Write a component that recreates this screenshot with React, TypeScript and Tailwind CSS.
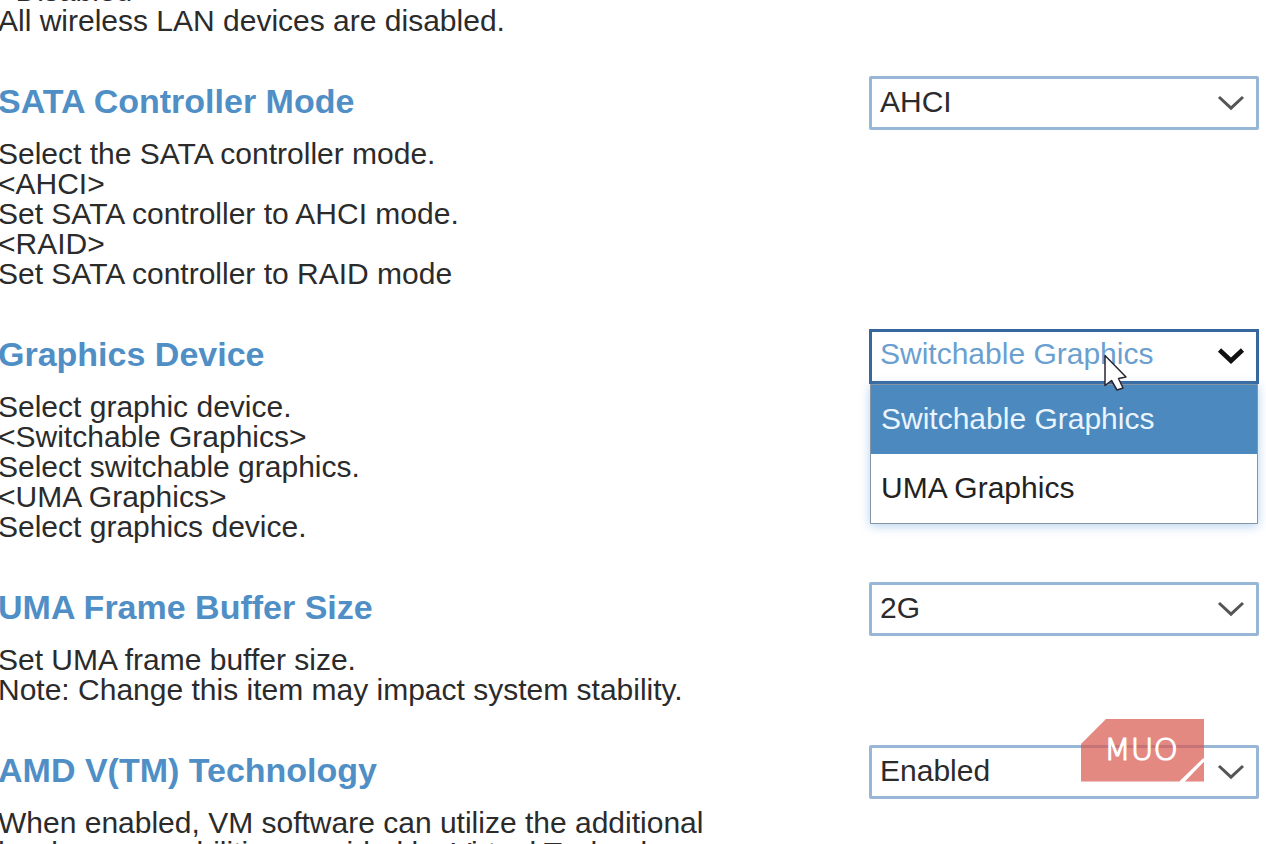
import { useState } from "react";
import type { ReactNode } from "react";

function Chevron({ bold = false }: { bold?: boolean }) {
  return (
    <svg
      className="pointer-events-none absolute top-[18px] right-[13px] h-[18px] w-[30px]"
      viewBox="0 0 30 18"
      fill="none"
      stroke={bold ? "#111111" : "#555555"}
      strokeWidth={bold ? 4.6 : 3}
      aria-hidden="true"
    >
      <path d={bold ? "M3.5 3 15 13.8 26.5 3" : "M3 3 15 14.2 27 3"} />
    </svg>
  );
}

function SelectBox({ id, options }: { id: string; options: string[] }) {
  return (
    <div className="relative">
      <select
        id={id}
        className="block h-[54px] w-full appearance-none rounded-[2px] border-3 border-[#98b7d6] bg-white pr-12 pb-[3px] pl-2 text-[30px] leading-[45px] text-[#2b2b2b] outline-none"
      >
        {options.map((option) => (
          <option key={option}>{option}</option>
        ))}
      </select>
      <Chevron />
    </div>
  );
}

function Pointer() {
  return (
    <svg
      className="pointer-events-none absolute top-[25px] left-[235px] z-20 h-[40px] w-[26px]"
      viewBox="0 0 26 40"
      aria-hidden="true"
    >
      <path
        d="M1 1.5V31.5L7.500 26.500L13 36L19 34L14.5 24.5L22 23Z"
        fill="#ffffff"
        stroke="#2b2530"
        strokeWidth="1.5"
        strokeLinejoin="round"
      />
    </svg>
  );
}

function OpenSelect({ id, options }: { id: string; options: string[] }) {
  const [value, setValue] = useState(options[0]);
  const [open, setOpen] = useState(true);
  return (
    <div className="relative">
      <button
        id={id}
        type="button"
        aria-haspopup="listbox"
        aria-expanded={open}
        onClick={() => setOpen(!open)}
        className="block h-[55px] w-full border-3 border-[#36679d] bg-white pb-[5px] pl-2 text-left text-[30px] leading-[44px] text-[#6a9fd0] outline-none"
      >
        {value}
      </button>
      <Chevron bold />
      {open && (
        <div
          role="listbox"
          className="absolute top-full right-0 left-0 z-10 mx-px border border-[#8496a6] bg-white shadow-[0_2px_10px_rgba(90,155,220,0.45)]"
        >
          {options.map((option) => (
            <button
              key={option}
              type="button"
              role="option"
              aria-selected={option === value}
              onClick={() => {
                setValue(option);
                setOpen(false);
              }}
              className="block h-[69px] w-full bg-white pb-[3px] pl-[10px] text-left text-[30px] leading-[45px] text-[#222222] aria-selected:bg-[#4b89bf] aria-selected:text-[#eaf4fd]"
            >
              {option}
            </button>
          ))}
        </div>
      )}
      <Pointer />
    </div>
  );
}

function MuoLogo() {
  return (
    <svg
      className="pointer-events-none absolute right-[55px] bottom-[16px] h-[64px] w-[123px]"
      viewBox="0 0 123 64"
      role="img"
      aria-label="MUO"
    >
      <path d="M0 25 25 0H123V39L98.5 62.5H0Z" fill="#d9564d" fillOpacity="0.7" />
      <path d="M123 42.5V62.5H104Z" fill="#d9564d" fillOpacity="0.7" />
      <path d="M100.5 62.5 123 40.5" stroke="#ffffff" strokeWidth="3" />
      <text
        x="23"
        y="41"
        fontFamily="'DejaVu Sans', sans-serif"
        fontWeight="200"
        fontSize="31"
        fill="#ffffff"
        stroke="#ffffff"
        strokeWidth="1.2"
      >
        MUO
      </text>
    </svg>
  );
}

function Setting({
  id,
  title,
  lines,
  children,
}: {
  id: string;
  title: string;
  lines: string[];
  children: ReactNode;
}) {
  return (
    <section className="flex items-start justify-between">
      <div>
        <h2 className="text-[34px] leading-[50px] font-bold text-[#4f8fc6]">
          <label htmlFor={id}>{title}</label>
        </h2>
        <Description lines={lines} />
      </div>
      <div className="w-[390px] shrink-0">{children}</div>
    </section>
  );
}

function Description({ lines }: { lines: string[] }) {
  return (
    <div className="mt-[13px] text-[30px] leading-[30px] whitespace-nowrap text-[#2b2b2b]">
      {lines.map((line) => (
        <p key={line}>{line}</p>
      ))}
    </div>
  );
}

export default function App() {
  return (
    <main className="h-screen overflow-hidden bg-white font-['Liberation_Sans',Arial,sans-serif]">
      <div className="-mt-[37px] -ml-[2px] flex flex-col gap-10 pr-[7px]">
        <Description lines={["<Disabled>", "All wireless LAN devices are disabled."]} />
        <Setting
          id="sata"
          title="SATA Controller Mode"
          lines={[
            "Select the SATA controller mode.",
            "<AHCI>",
            "Set SATA controller to AHCI mode.",
            "<RAID>",
            "Set SATA controller to RAID mode",
          ]}
        >
          <SelectBox id="sata" options={["AHCI", "RAID"]} />
        </Setting>
        <Setting
          id="graphics"
          title="Graphics Device"
          lines={[
            "Select graphic device.",
            "<Switchable Graphics>",
            "Select switchable graphics.",
            "<UMA Graphics>",
            "Select graphics device.",
          ]}
        >
          <OpenSelect id="graphics" options={["Switchable Graphics", "UMA Graphics"]} />
        </Setting>
        <Setting
          id="buffer"
          title="UMA Frame Buffer Size"
          lines={[
            "Set UMA frame buffer size.",
            "Note: Change this item may impact system stability.",
          ]}
        >
          <SelectBox id="buffer" options={["2G"]} />
        </Setting>
        <Setting
          id="amdv"
          title="AMD V(TM) Technology"
          lines={[
            "When enabled, VM software can utilize the additional",
            "hardware capabilities provided by Virtual Technology.",
          ]}
        >
          <div className="relative">
            <SelectBox id="amdv" options={["Enabled", "Disabled"]} />
            <MuoLogo />
          </div>
        </Setting>
      </div>
    </main>
  );
}
